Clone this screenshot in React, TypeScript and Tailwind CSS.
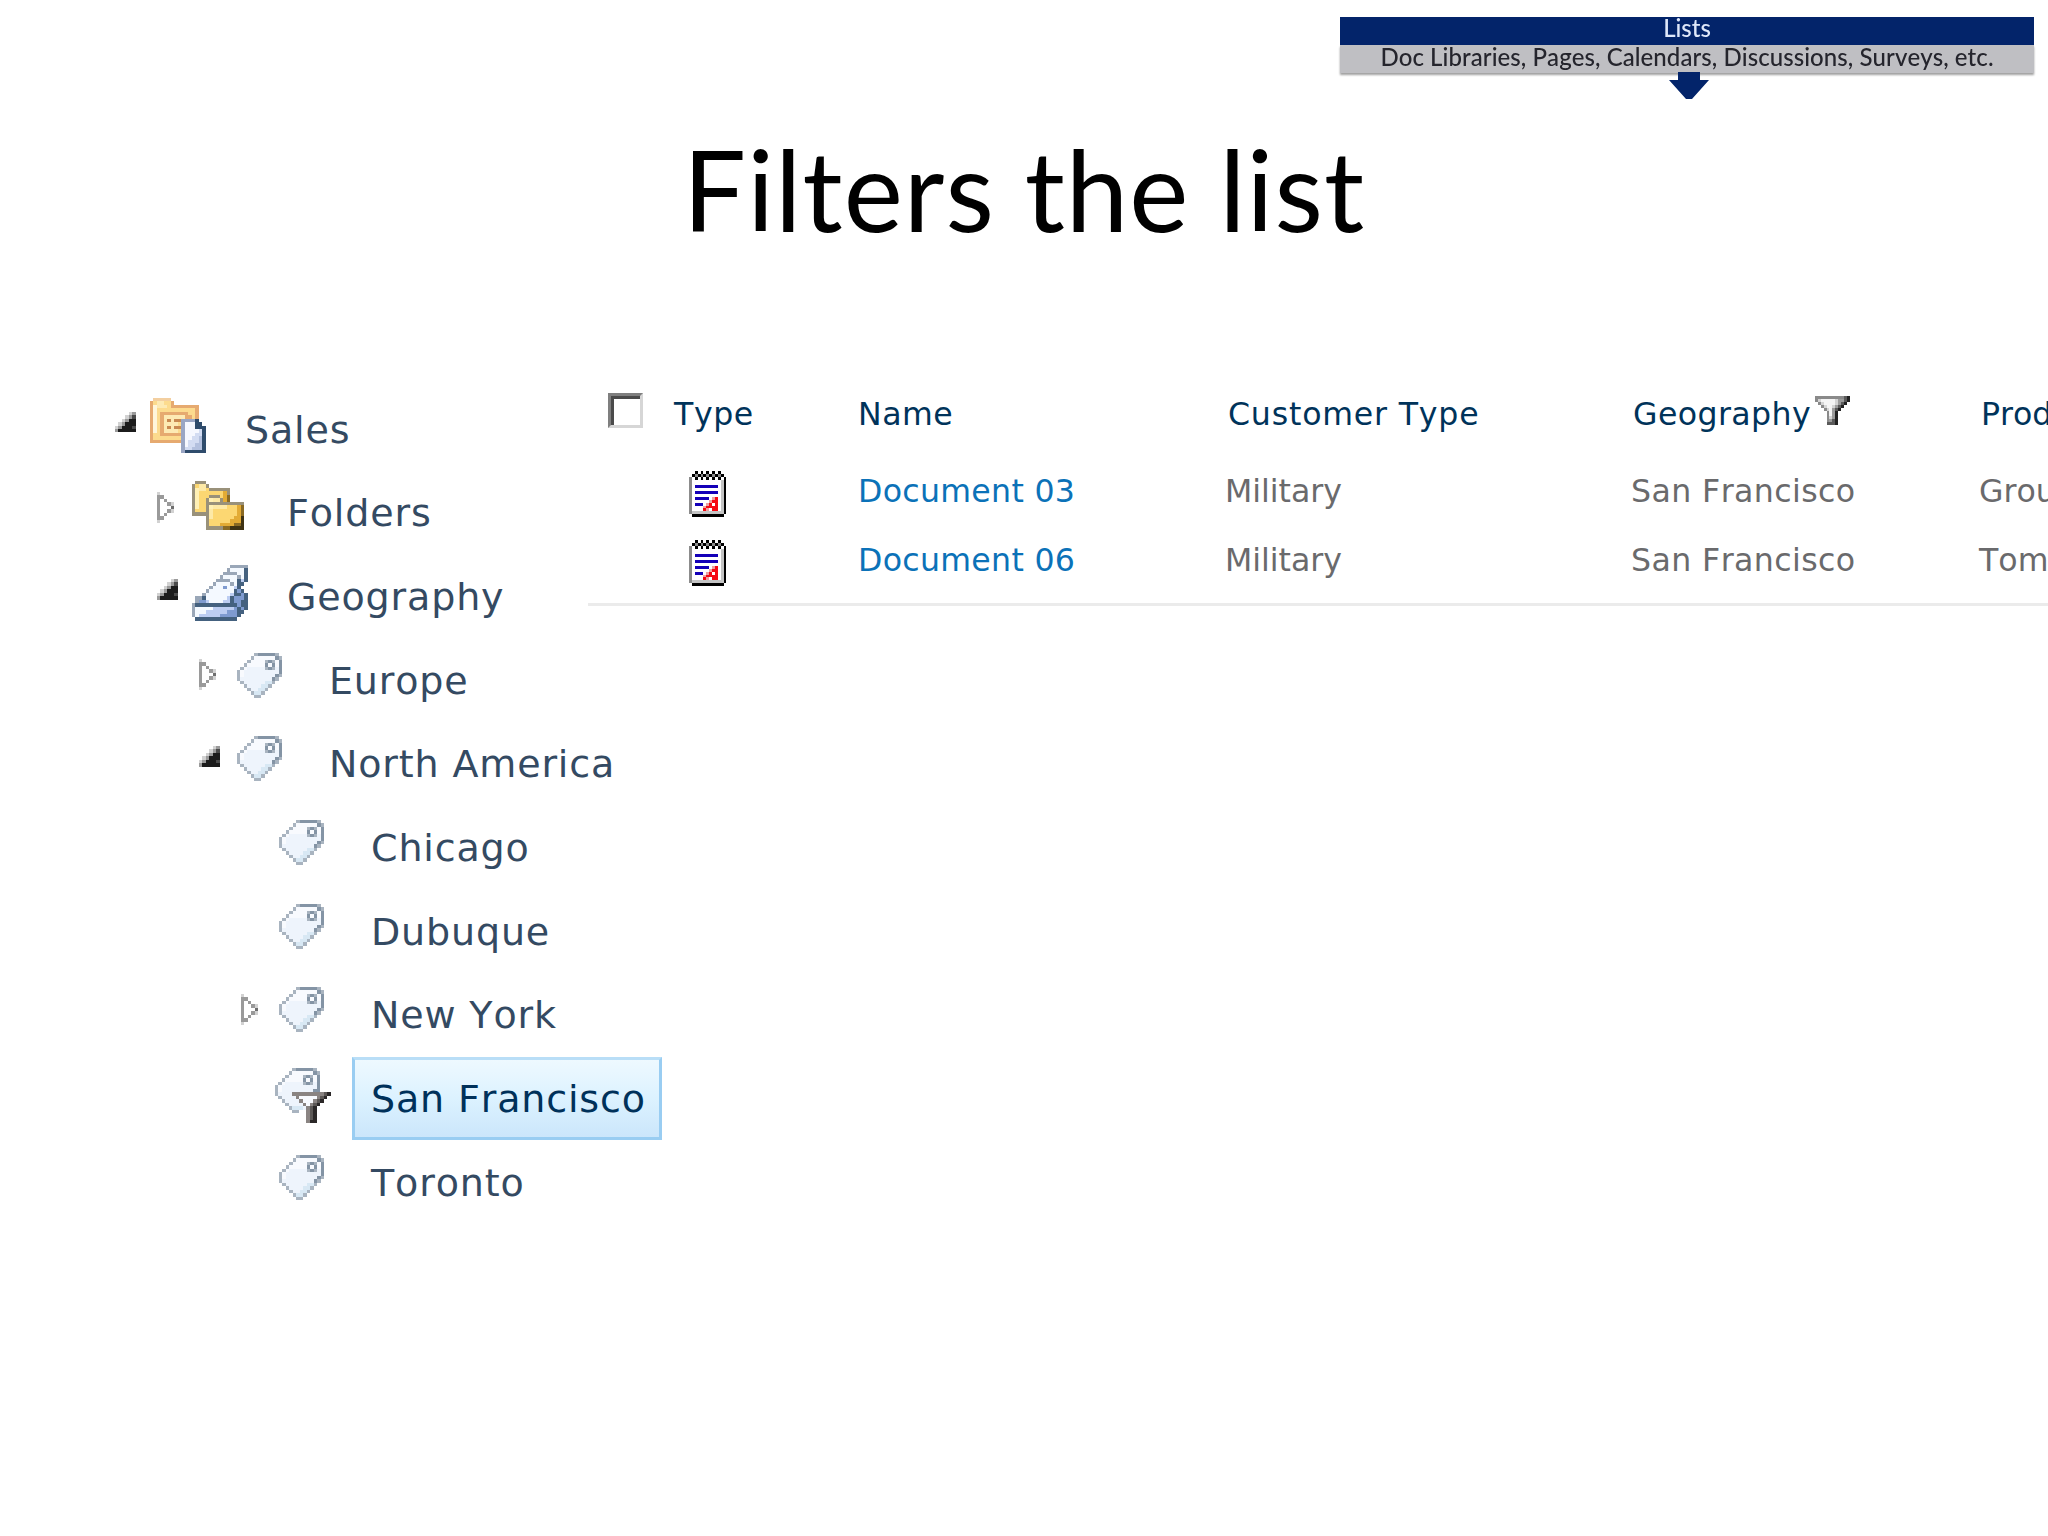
import React from 'react';

const PALETTES: Record<string, Record<string, string>> = {
  arrow: { a: '#d2d2d2', g: '#9a9a9a', m: '#6e6e6e', d: '#4a4a4a', k: '#1c1c1c' },
  site: {
    p: '#f3cfa0', o: '#e6aa70', l: '#fdeab4', w: '#fff6da', y: '#fcdb8e', z: '#c98a52',
    b: '#9aa6c4', n: '#2f4c6c', v: '#f6f8ff', c: '#d3dcf2', e: '#b3c0de',
  },
  folders: {
    g: '#99917a', w: '#fff0b4', l: '#fde9a6', y: '#fcd772', o: '#e3ab35', b: '#8a6a24', k: '#3f3314',
  },
  box: { g: '#9aa7b8', w: '#f4f9ff', b: '#7f9bd0', c: '#bccdf2', n: '#44617f' },
  tag: { g: '#a9b4c0', h: '#c3ccd6', w: '#eef4fc', v: '#f8fafe', c: '#d8e8f4', n: '#8494a5', m: '#8a8482', d: '#5c5856', k: '#2b2828' },
  funnel: { g: '#8a8a8a', w: '#f4f4f4', l: '#d4d4d4', m: '#9c9c9c', d: '#5a5a5a', k: '#222222' },
  notepad: { k: '#000000', g: '#8c8c8c', s: '#c4c4c4', w: '#ffffff', b: '#1400b8', l: '#f0a0a0', r: '#f50a14' },
};

const ARROW_OPEN = ['....ag', '...agd', '..agkk', '.agkkk', 'agkkkd', 'gkkkkk'];

const ARROW_CLOSED = ['a.....', 'gg....', 'g.g...', 'g..ga.', 'g...m.', 'g..ga.', 'g.g...', 'gg....', 'a.....'];

const SITE = [
  '.ppppp..........',
  'oyllyyo.........',
  'owlllyoooooooo..',
  'owyyyyyyyyyyyo..',
  'owyooooooooyyo..',
  'owyollllllooyo..',
  'owyolzlzzbbbbn..',
  'owyollllybvvvnn.',
  'owyolzlzzbvvvnnn',
  'owyollllybvvvvcn',
  'oyyoooooobvvvccn',
  'oyyyyyyyybvvccen',
  'ooooooooobvcccen',
  '.........bvcceen',
  '.........bcceeen',
  '.........bnnnnnn',
];

const FOLDERS = [
  '.ggg...........',
  'gyllg..........',
  'gwllygggggg....',
  'gwyyyyyyyog....',
  'gwyyygggyob....',
  'gwyygwllgob....',
  'gwyyggggggggggg',
  'gwyygwllllyyyob',
  'gyyyglyyyyyyyob',
  'ggggglyyyyyyyob',
  '....glyyyyyyook',
  '....gyyyyyyoook',
  '....gyyyoooobbk',
  '....gggggbbkkkk',
];

const TERM_SET = [
  '...........ggggg',
  '..........gwwwwn',
  '.........ggggwwn',
  '........gwwwwgwn',
  '.......ggggwwncn',
  '......gwwwwgwnn.',
  '.....gwwwbwwcn..',
  '....gwwwwwwwnbn.',
  '...gwwwwwwwcnnbn',
  '.ggnwwwwwwcnbbbn',
  '.gbbcwwwwccnbbnn',
  'gnnnnnnnnnnnnbnn',
  'gwwwwwccccccbnbn',
  'gwwwccccccbbbnn.',
  'gwccccccbbbbbn..',
  '.nnnnnnnnnnnn...',
];

const TAG = [
  '.....gnnnnng.',
  '....gvvvvvvng',
  '...gvvvvgngvn',
  '..gvvvvvnvnvn',
  '.gvwwwwwgngwn',
  'gvwwwwwwwwwwn',
  'gvwwwwwwwwwng',
  'gwwwwwwwwwng.',
  '.gwwwwwwccg..',
  '..gwwwwccg...',
  '...gwwccg....',
  '....gccg.....',
  '.....gg......',
];

const TAG_FILTERED = [
  '.....gnnnnng....',
  '....gvvvvvvng...',
  '...gvvvvgngvn...',
  '..gvvvvvnvnvn...',
  '.gvwwwwwgngwn...',
  'gvwwwwwwwwwwn...',
  'gvwwwwwwwwwnn...',
  'gwwwwmmmmmmmmmdk',
  '.gwwwwmvvvvvmdk.',
  '..gwwwwmvvvmdk..',
  '...gwwwwmvmdk...',
  '....gcccwmdk....',
  '.....gg..mdk....',
  '.........mdk....',
  '.........mdk....',
  '.........mkk....',
];

const FUNNEL = [
  'ggggggggggdk',
  'glwwwwwlmmdk',
  '.glwwwwlmdk.',
  '..glwwlmdk..',
  '...glwmdk...',
  '....gwmk....',
  '....gwmk....',
  '....glmk....',
  '....gmdk....',
  '....dddk....',
];

const NOTEPAD = [
  '..k.k.k.k.k..',
  '.kgkgkgkgkgk.',
  'gwkwkwkwkwkwk',
  'gwwwwwwwwwwsk',
  'gwwwwwwwwwwsk',
  'gwbbbbbbbbwsk',
  'gwwwwwwwwwwsk',
  'gwbbbbbbbbwsk',
  'gwwwwwwwwwwsk',
  'gwbbbbbwlrwsk',
  'gwwwwwwlrrwsk',
  'gwbbbwlrwrwsk',
  'gwwwwlrrrrwsk',
  'gwwwwrlwrrwsk',
  'gsssssssssssk',
  '.kkkkkkkkkkk.',
];

interface PixelIconProps {
  rows: string[];
  palette: string;
  cell: number;
  className?: string;
}

// Each character of a row is one cell, looked up in the palette
const PixelIcon: React.FC<PixelIconProps> = ({ rows, palette, cell, className }) => {
  const cols = rows[0].length;
  return (
    <svg
      className={`block shrink-0 ${className || ''}`}
      width={cols * cell}
      height={rows.length * cell}
      viewBox={`0 0 ${cols} ${rows.length}`}
      shapeRendering="crispEdges"
    >
      {rows.map((row, y) =>
        row.split('').map((ch, x) =>
          ch === '.' ? null : <rect key={`${x}-${y}`} x={x} y={y} width={1} height={1} fill={PALETTES[palette][ch]} />
        )
      )}
    </svg>
  );
};

interface TreeNode {
  label: string;
  indent: string;
  icon: 'site' | 'folders' | 'box' | 'tag' | 'filtered';
  arrow?: 'open' | 'closed';
  selected?: boolean;
}

const nodes: TreeNode[] = [
  { label: 'Sales', indent: 'pl-[115px]', icon: 'site', arrow: 'open' },
  { label: 'Folders', indent: 'pl-[157px]', icon: 'folders', arrow: 'closed' },
  { label: 'Geography', indent: 'pl-[157px]', icon: 'box', arrow: 'open' },
  { label: 'Europe', indent: 'pl-[199px]', icon: 'tag', arrow: 'closed' },
  { label: 'North America', indent: 'pl-[199px]', icon: 'tag', arrow: 'open' },
  { label: 'Chicago', indent: 'pl-[241px]', icon: 'tag' },
  { label: 'Dubuque', indent: 'pl-[241px]', icon: 'tag' },
  { label: 'New York', indent: 'pl-[241px]', icon: 'tag', arrow: 'closed' },
  { label: 'San Francisco', indent: 'pl-[241px]', icon: 'filtered', selected: true },
  { label: 'Toronto', indent: 'pl-[241px]', icon: 'tag' },
];

const NodeIcon: React.FC<{ icon: TreeNode['icon'] }> = ({ icon }) => {
  switch (icon) {
    case 'site':
      return <PixelIcon rows={SITE} palette="site" cell={3.49} className="mt-[10px]" />;
    case 'folders':
      return <PixelIcon rows={FOLDERS} palette="folders" cell={3.49} className="mt-[9.5px]" />;
    case 'box':
      return <PixelIcon rows={TERM_SET} palette="box" cell={3.49} className="mt-[10.5px]" />;
    case 'filtered':
      return <PixelIcon rows={TAG_FILTERED} palette="tag" cell={3.49} className="mt-[10.5px] -ml-px" />;
    default:
      return <PixelIcon rows={TAG} palette="tag" cell={3.49} className="mt-[14px] ml-[3px]" />;
  }
};

const TreeRow: React.FC<{ node: TreeNode }> = ({ node }) => (
  <li className={`flex items-start h-[83.7px] ${node.indent}`}>
    <div className="w-[35px] shrink-0">
      {node.arrow === 'open' && <PixelIcon rows={ARROW_OPEN} palette="arrow" cell={3.49} className="mt-[24px]" />}
      {node.arrow === 'closed' && <PixelIcon rows={ARROW_CLOSED} palette="arrow" cell={3.49} className="mt-[20.5px]" />}
    </div>
    <div className="w-[76px] shrink-0">
      <NodeIcon icon={node.icon} />
    </div>
    <span
      className={`h-[83px] pl-[16px] pr-[13px] leading-[79px] whitespace-nowrap border-[3.5px] ${
        node.selected
          ? 'text-[#00315a] border-[#99cdf2] border-t-[#b9def7] bg-gradient-to-b from-[#eef9ff] via-[#dcf2ff] to-[#cbe6fb]'
          : 'text-[#344a62] border-transparent'
      }`}
    >
      {node.label}
    </span>
  </li>
);

const documents = [
  { name: 'Document 03', customerType: 'Military', geography: 'San Francisco', product: 'Group' },
  { name: 'Document 06', customerType: 'Military', geography: 'San Francisco', product: 'Tom' },
];

const Banner: React.FC = () => (
  <div className="w-[694px] font-[Lato,sans-serif] font-medium text-center whitespace-nowrap blur-[0.6px]">
    <div className="h-7 bg-[#03246a] text-[#dfe8fa] text-[24px] leading-[22px]">Lists</div>
    <div className="h-7 bg-[#bfbfc3] text-[#25252d] text-[24px] tracking-[0.06px] leading-[24px] shadow-[0_2px_2px_#a0a0a0]">
      Doc Libraries, Pages, Calendars, Discussions, Surveys, etc.
    </div>
    <svg className="relative mx-auto left-[2px] -mt-px" width="40" height="27" viewBox="0 0 40 27">
      <path d="M9 0H31V8H40L23 27H17L0 8H9Z" fill="#03246a" />
    </svg>
  </div>
);

const App: React.FC = () => {
  return (
    <div className="w-[2048px] h-[1536px] overflow-hidden bg-white font-['DejaVu_Sans',sans-serif] [font-kerning:none]">
      <header className="h-[380px] pt-[17px]">
        <div className="flex justify-end pr-[14px]">
          <Banner />
        </div>
        <h1 className="mt-[23px] text-center font-[Lato,sans-serif] text-[112px] leading-[134px] tracking-[1px] text-black">
          Filters the list
        </h1>
      </header>
      <main className="flex items-start">
        <ul className="w-[588px] shrink-0 pt-[7.5px] text-[38px] tracking-[0.85px]">
          {nodes.map((node) => (
            <TreeRow key={node.label} node={node} />
          ))}
        </ul>
        <div className="w-[1460px] h-[226px] overflow-hidden border-b-[3px] border-[#ebebeb] text-[31.6px] leading-[69px] whitespace-nowrap">
          <div className="grid grid-cols-[86px_184px_366px_406px_348px_70px] h-[77px] text-[#00335a]">
            <div className="pl-[20px] pt-[13px]">
              <div className="w-[35px] h-[35px] border-[3px] border-t-[#7f7f7f] border-l-[#7f7f7f] border-b-[#d6d6d6] border-r-[#d6d6d6]">
                <div className="w-[29px] h-[29px] border-t-[3px] border-l-[3px] border-[#4a4a4a]" />
              </div>
            </div>
            <div className="tracking-[0.6px]">Type</div>
            <div className="tracking-[0.5px]">Name</div>
            <div className="pl-[4px] tracking-[0.8px]">Customer Type</div>
            <div className="flex items-start pl-[3px] tracking-[0.4px]">
              Geography
              <PixelIcon rows={FUNNEL} palette="funnel" cell={2.9} className="mt-[16px] ml-[4px]" />
            </div>
            <div className="pl-[3px]">Product</div>
          </div>
          {documents.map((doc) => (
            <div key={doc.name} className="grid grid-cols-[86px_184px_366px_406px_348px_70px] h-[69px] text-[#6a6a6c]">
              <div />
              <div className="pl-[14.5px]">
                <PixelIcon rows={NOTEPAD} palette="notepad" cell={2.88} className="mt-[14px]" />
              </div>
              <div className="text-[#0b72b8] tracking-[0.3px]">{doc.name}</div>
              <div className="pl-px">{doc.customerType}</div>
              <div className="pl-px tracking-[0.4px]">{doc.geography}</div>
              <div className="pl-px">{doc.product}</div>
            </div>
          ))}
        </div>
      </main>
    </div>
  );
};

export default App;
